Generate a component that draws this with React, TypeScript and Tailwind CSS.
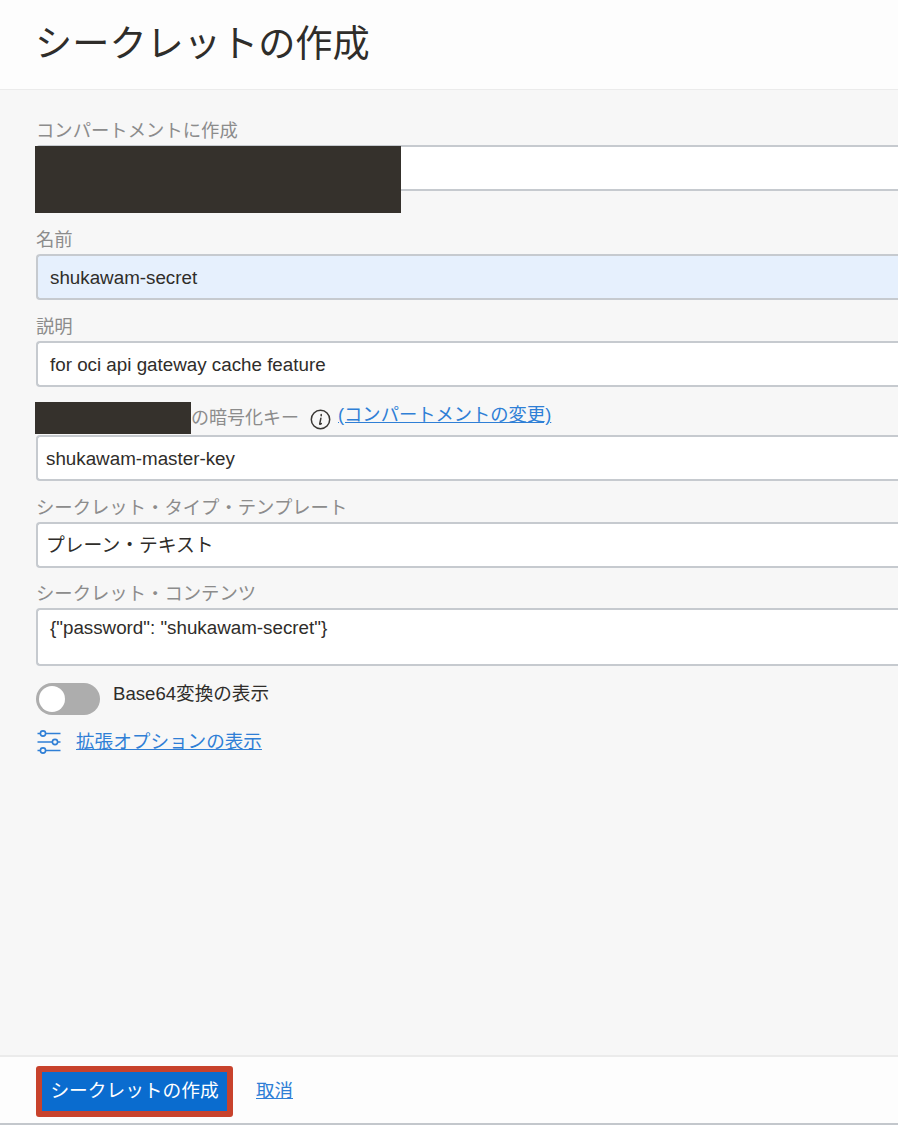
const fontStack = '[font-family:"Liberation_Sans","Noto_Sans_CJK_JP",sans-serif]';

function Label({ children }: { children: React.ReactNode }) {
  return <div className="h-6 mb-[3px] pl-[36px] pt-[1px] text-[18.35px] leading-6 text-[#8c8c8c]">{children}</div>;
}

function Input({ value, tint, inset }: { value: string; tint?: boolean; inset?: boolean }) {
  return (
    <div
      className={`h-[46px] ml-[36px] pt-[2px] flex items-center border-2 border-r-0 border-[#c6cacf] rounded-l-[4px] text-[18.8px] text-[#2f2d2a] ${
        tint ? 'bg-[#e6f0fd]' : 'bg-white'
      } ${inset ? 'pl-[8px]' : 'pl-[12px]'}`}
    >
      {value}
    </div>
  );
}

function SlidersIcon() {
  return (
    <svg width="24" height="24" viewBox="0 0 24 24" fill="none" stroke="#2f7fd6" strokeWidth="1.6">
      <circle cx="6" cy="3.5" r="2.6" />
      <path d="M0.5 3.5h2.5M9 3.5h14.5" />
      <circle cx="18" cy="12" r="2.6" />
      <path d="M0.5 12h14.5M21 12h2.5" />
      <circle cx="6" cy="20.5" r="2.6" />
      <path d="M0.5 20.5h2.5M9 20.5h14.5" />
    </svg>
  );
}

export default function App() {
  return (
    <div className={`h-[1125px] w-[898px] overflow-hidden flex flex-col bg-[#f7f7f7] ${fontStack}`}>
      <header className="h-[90px] shrink-0 bg-[#fdfdfd] border-b border-[#ebebeb] pl-[35px] flex items-center">
        <h1 className="text-[37.2px] leading-none text-[#2f2d2a]">シークレットの作成</h1>
      </header>

      <main className="flex-1 pt-[28px]">
        <div className="relative mb-[36px]">
          <Label>コンパートメントに作成</Label>
          <Input value="" />
          <div className="absolute left-[35px] top-[28px] h-[67px] w-[366px] bg-[#35312c]" />
        </div>

        <div className="mb-[14px]">
          <Label>名前</Label>
          <Input value="shukawam-secret" tint />
        </div>

        <div className="mb-[14px]">
          <Label>説明</Label>
          <Input value="for oci api gateway cache feature" />
        </div>

        <div className="mb-[14px]">
          <div className="h-[33px] mb-[1px] flex items-center pl-[35px] text-[18.3px] text-[#8c8c8c]">
            <div className="h-[32px] w-[156px] bg-[#35312c]" />
            <span className="mt-[2px] text-[18px]">の暗号化キー</span>
            <svg className="ml-[11px] mt-[4px]" width="21" height="21" viewBox="0 0 21 21" fill="none">
              <circle cx="10.5" cy="10.5" r="9.2" stroke="#3a3835" strokeWidth="1.5" />
              <path d="M11.2 5.6v1.2M10.9 9.2l-1.2 5.6c0 .6.6.7 1.6-.2" stroke="#3a3835" strokeWidth="1.5" strokeLinecap="round" />
            </svg>
            <a className="ml-[7px] -mt-[5px] text-[#2f7fd6] underline whitespace-nowrap">(コンパートメントの変更)</a>
          </div>
          <Input value="shukawam-master-key" inset />
        </div>

        <div className="mb-[13px]">
          <Label>シークレット・タイプ・テンプレート</Label>
          <Input value="プレーン・テキスト" inset />
        </div>

        <div className="mb-[17px]">
          <Label>シークレット・コンテンツ</Label>
          <div className="h-[58px] ml-[36px] pl-[12px] pt-[6px] border-2 border-r-0 border-[#c6cacf] rounded-l-[4px] bg-white text-[18.8px] leading-[24px] text-[#2f2d2a]">
            {'{"password": "shukawam-secret"}'}
          </div>
        </div>

        <div className="ml-[36px] flex items-start gap-[13px] mb-[15px]">
          <div className="h-[32px] w-[64px] rounded-full bg-[#adadad] flex items-center pl-[3px]">
            <div className="h-[26px] w-[26px] rounded-full bg-white" />
          </div>
          <span className="-mt-[1px] text-[18.6px] leading-[24px] text-[#2f2d2a]">Base64変換の表示</span>
        </div>

        <div className="ml-[37px] flex items-center gap-[15px]">
          <SlidersIcon />
          <a className="text-[18.6px] leading-[24px] text-[#2f7fd6] underline">拡張オプションの表示</a>
        </div>
      </main>

      <footer className="h-[70px] shrink-0 pt-[2px] bg-[#fdfdfd] border-t-2 border-t-[#ebebeb] border-b-2 border-b-[#c3c7cc] flex items-center pl-[36px] gap-[23px]">
        <button className="h-[51px] w-[197px] border-[6px] border-[#c8422c] rounded-[3px] bg-[#0a6ccf] text-white text-[18.7px] whitespace-nowrap">
          シークレットの作成
        </button>
        <a className="text-[18.5px] text-[#2f7fd6] underline">取消</a>
      </footer>
    </div>
  );
}
